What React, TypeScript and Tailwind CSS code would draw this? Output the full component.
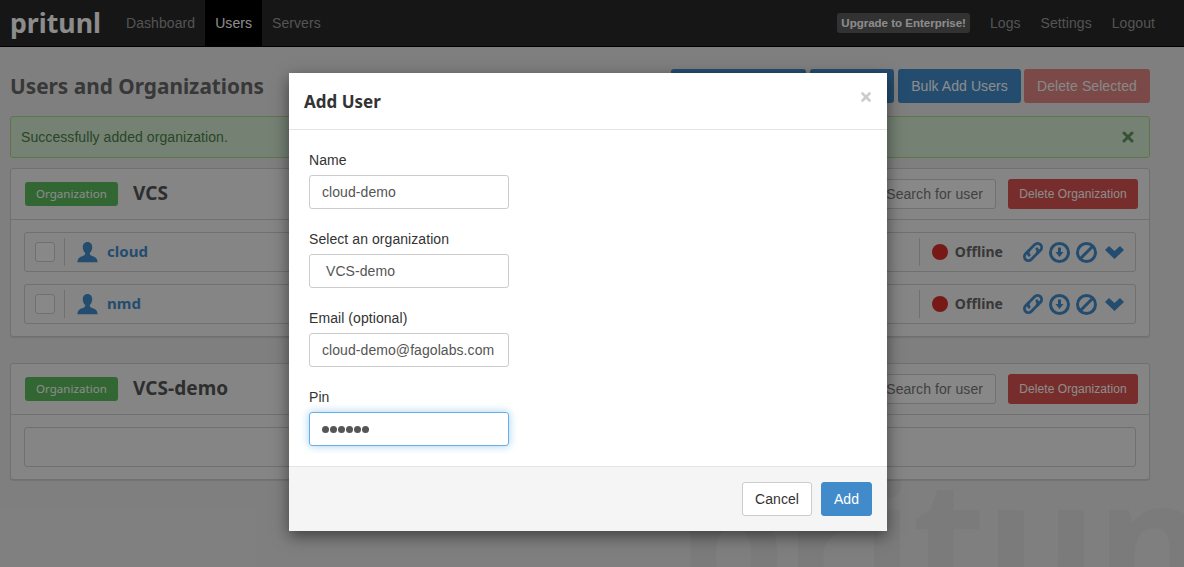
import { X } from 'lucide-react'

const ubuntu = 'font-["Noto_Sans",sans-serif] font-bold'

function UserRow({ name }: { name: string }) {
  return (
    <div className="flex h-10 items-center rounded-[3px] border border-[#ccc] pl-[10px] pr-[11px]">
      <span className="h-5 w-5 rounded-[3px] border border-[#ccc] bg-[#f8f8f8]" />
      <span className="ml-[9px] mr-3 h-7 w-px bg-[#ccc]" />
      <svg viewBox="0 0 24 24" className="mr-[9px] h-[21px] w-[21px] fill-[#428bca]">
        <path d="M12 0c-3.600 0-5.400 2.800-5.400 6 0 2.600 1.200 5.200 2.800 6.600 0 1.500-.3 2.300-2 3C4 16.800.5 17.800.5 23h23c0-5.200-3.500-6.200-6.900-7.400-1.700-.7-2-1.500-2-3 1.600-1.400 2.800-4 2.800-6.600C17.400 2.800 15.600 0 12 0z" />
      </svg>
      <span className={`${ubuntu} text-[15px] text-[#428bca]`}>{name}</span>
      <span className="ml-auto mr-3 h-7 w-px bg-[#ccc]" />
      <span className="mr-[7px] h-4 w-4 rounded-full bg-[#d9302a]" />
      <span className={`${ubuntu} mr-[18px] text-[14px] text-[#666]`}>Offline</span>
      <div className="flex items-center text-[#428bca]">
        <svg viewBox="0 0 24 24" className="h-6 w-6" fill="none" stroke="currentColor" strokeWidth={2.800} strokeLinecap="round">
          <g transform="rotate(-45 12 12)">
            <path d="M10 8H5.500a4 4 0 0 0 0 8H13a4 4 0 0 0 4-3.500" />
            <path d="M14 16h4.500a4 4 0 0 0 0-8H11a4 4 0 0 0-4 3.500" />
          </g>
        </svg>
        <svg viewBox="0 0 21 21" className="ml-1 h-[21px] w-[21px]">
          <circle cx="10.500" cy="10.500" r="9" fill="none" stroke="currentColor" strokeWidth={3} />
          <path d="M9 5.500h3v4.500h2.500l-4 5-4-5H9z" fill="currentColor" />
        </svg>
        <svg viewBox="0 0 21 21" className="ml-[6px] h-[21px] w-[21px]" fill="none" stroke="currentColor" strokeWidth={3}>
          <circle cx="10.500" cy="10.500" r="9" />
          <path d="M4.500 16.500l12-12" />
        </svg>
        <svg viewBox="0 0 19 13" className="ml-2 h-[13px] w-[19px]" fill="currentColor">
          <path d="M0 4l4-4 5.500 5L15 0l4 4-9.500 9z" />
        </svg>
      </div>
    </div>
  )
}

function OrgPanel({ name, children }: { name: string; children: React.ReactNode }) {
  return (
    <div className="rounded-[3px] border border-[#ccc] bg-[#f2f2f2] shadow-[0_1px_1px_rgba(0,0,0,0.1)]">
      <div className="flex h-[51px] items-center border-b border-[#ccc] pl-[14px] pr-[11px]">
        <span className="flex h-6 w-[93px] items-center justify-center rounded-[3px] bg-[#5cba5c] font-['Noto_Sans',sans-serif] text-[11.5px] text-white">
          Organization
        </span>
        <span className={`${ubuntu} ml-[15px] text-[19px] text-[#555]`}>{name}</span>
        <span className="ml-auto flex h-[30px] w-[200px] items-center rounded-[3px] border border-[#ccc] bg-[#f8f8f8] px-3 text-sm text-[#777]">
          <span className="ml-auto">Search for user</span>
        </span>
        <button className="ml-3 h-[30px] w-[130px] rounded-[3px] bg-[#d9534f] text-xs text-white">Delete Organization</button>
      </div>
      <div className="flex flex-col gap-3 px-[13px] py-3">{children}</div>
    </div>
  )
}

function Field({ label, value, className }: { label: string; value: string; className?: string }) {
  return (
    <div className="mb-5">
      <div className="mb-[5px] h-5 leading-5 text-[#333]">{label}</div>
      <div className={`flex h-[34px] w-[200px] items-center rounded-[3px] border border-[#ccc] px-3 text-[#555] ${className ?? ''}`}>{value}</div>
    </div>
  )
}

export default function App() {
  return (
    <div className="relative h-[567px] w-[1184px] overflow-hidden bg-[#e8e8e8] font-['Liberation_Sans',sans-serif] text-sm tracking-[0.07px]">
      {/* faint logo behind the page */}
      <span className={`${ubuntu} absolute left-[678px] top-[452px] select-none text-[170px] leading-none tracking-normal text-[#e0e0e0]`}>pritunl</span>

      <nav className="relative flex h-[47px] items-stretch border-b border-black bg-[#282828] pr-[19px] text-[#999]">
        <span className={`${ubuntu} ml-[10px] mr-[15px] w-[91px] self-center text-[26.700px] leading-none tracking-normal text-white`}>pritunl</span>
        <a className="flex items-center px-[10px]">Dashboard</a>
        <a className="flex items-center bg-black px-[10px] text-white">Users</a>
        <a className="flex items-center px-[10px]">Servers</a>
        <span className="ml-auto flex h-5 items-center self-center rounded-[3px] bg-[#5c5c5c] px-1 text-[11.5px] font-bold tracking-normal text-white">Upgrade to Enterprise!</span>
        <a className="ml-[10px] flex items-center px-[10px]">Logs</a>
        <a className="flex items-center px-[10px]">Settings</a>
        <a className="flex items-center px-[10px]">Logout</a>
      </nav>

      <main className="relative flex w-[1160px] flex-col px-[10px] pt-[22px]">
        <div className="flex h-[34px] items-center">
          <h1 className={`${ubuntu} pt-[2px] text-[20.800px] tracking-normal text-[#666]`}>Users and Organizations</h1>
          <div className="ml-auto flex gap-1 text-white">
            <button className="h-[34px] w-[135px] rounded-[3px] bg-[#428bca]">Add Organization</button>
            <button className="h-[34px] w-[84px] rounded-[3px] bg-[#428bca]">Add User</button>
            <button className="h-[34px] w-[123px] rounded-[3px] bg-[#428bca]">Bulk Add Users</button>
            <button className="-ml-px h-[34px] w-[126px] rounded-[3px] bg-[#d9534f] opacity-65">Delete Selected</button>
          </div>
        </div>

        <div className="mt-[13px] flex h-[42px] items-center justify-between rounded-[3px] border border-[#a8d88a] bg-[#d6ecd2] pl-[10px] pr-[13px] text-[#4a7f4a]">
          <span>Successfully added organization.</span>
          <X className="h-4 w-4 opacity-80" strokeWidth={4.5} />
        </div>

        <div className="mt-[10px]">
          <OrgPanel name="VCS">
            <UserRow name="cloud" />
            <UserRow name="nmd" />
          </OrgPanel>
        </div>
        <div className="mt-[26px]">
          <OrgPanel name="VCS-demo">
            <div className="h-10 rounded-[3px] border border-[#ccc]" />
          </OrgPanel>
        </div>
      </main>

      <div className="absolute inset-0 bg-black/45" />

      <div className="absolute left-[289px] top-[73px] w-[598px] bg-white shadow-[0_5px_15px_rgba(0,0,0,0.5)]">
        <div className="flex h-[57px] items-center justify-between border-b border-[#e5e5e5] pl-[15px] pr-[14px]">
          <h4 className={`${ubuntu} pt-[2px] text-[17px] tracking-normal text-[#333]`}>Add User</h4>
          <X className="mb-2 h-[14px] w-[14px] text-[#ccc]" strokeWidth={4.5} />
        </div>
        <div className="p-5">
          <Field label="Name" value="cloud-demo" />
          <Field label="Select an organization" value="VCS-demo" className="pl-4" />
          <Field label="Email (optional)" value="cloud-demo@fagolabs.com" />
          <div>
            <div className="mb-[5px] h-5 leading-5 text-[#333]">Pin</div>
            <div className="flex h-[34px] w-[200px] items-center rounded-[3px] border border-[#66afe9] px-3 text-[#555] shadow-[0_0_8px_rgba(102,175,233,0.6)]">
              <span className="flex gap-[1px]">
                {[0, 1, 2, 3, 4, 5].map(i => (
                  <span key={i} className="h-[7px] w-[7px] rounded-full bg-[#555]" />
                ))}
              </span>
            </div>
          </div>
        </div>
        <div className="flex justify-end gap-[9px] border-t border-[#e5e5e5] bg-[#f5f5f5] p-[15px]">
          <button className="h-[34px] w-[70px] rounded-[3px] border border-[#ccc] bg-white text-[#333]">Cancel</button>
          <button className="h-[34px] w-[51px] rounded-[3px] border border-[#428bca] bg-[#428bca] text-white">Add</button>
        </div>
      </div>
    </div>
  )
}
